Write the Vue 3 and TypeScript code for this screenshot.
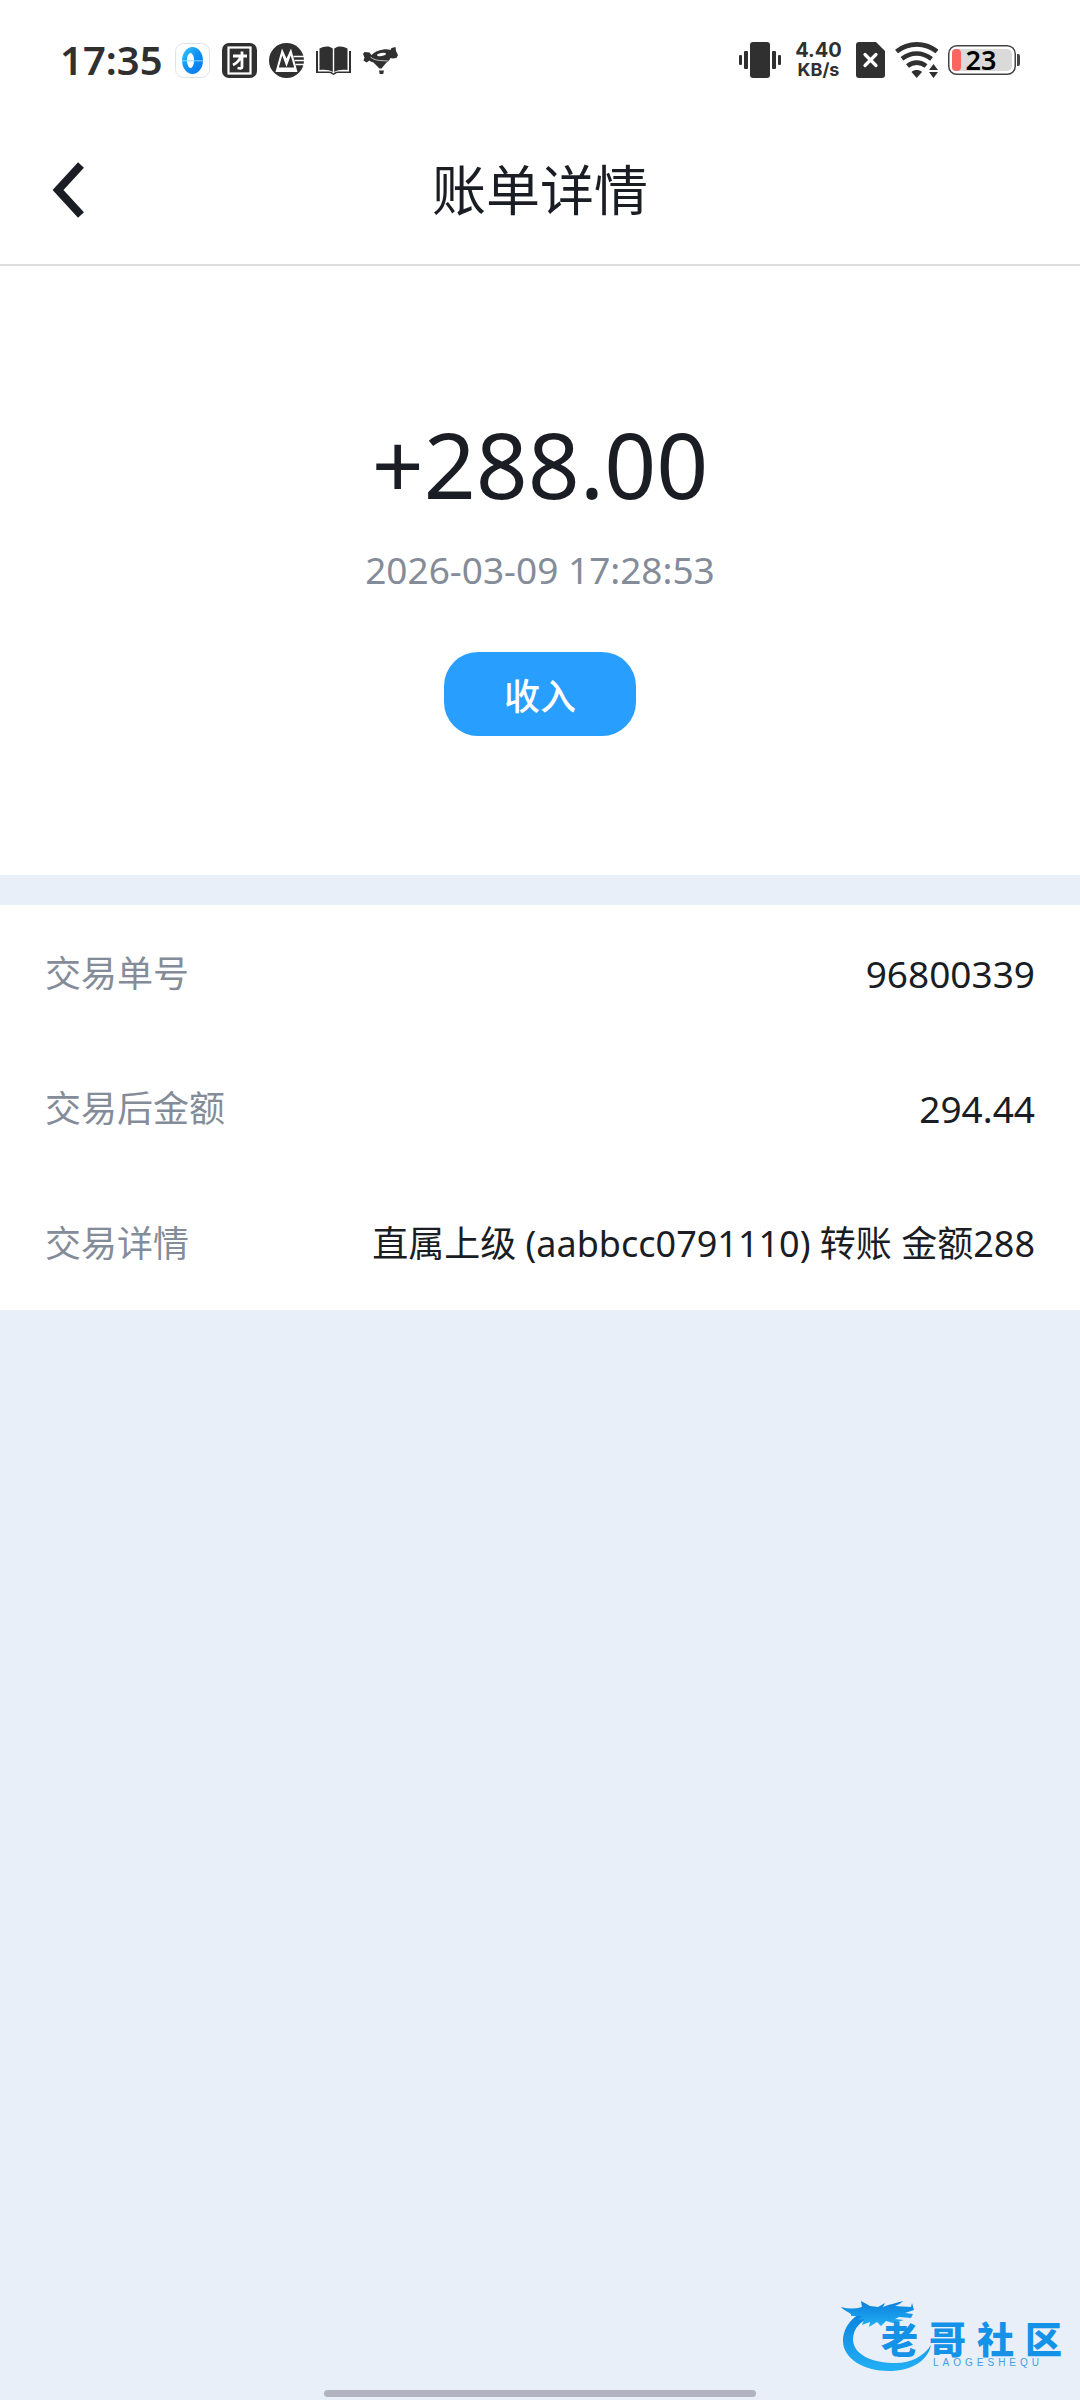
<script setup lang="ts">
interface DetailRow {
  label: string
  value: string
  numeric: boolean
}

const rows: DetailRow[] = [
  { label: '交易单号', value: '96800339', numeric: true },
  { label: '交易后金额', value: '294.44', numeric: true },
  { label: '交易详情', value: '直属上级 (aabbcc0791110) 转账 金额288', numeric: false },
]
const brand: string[] = ['老', '哥', '社', '区']
</script>

<template>
  <div class="page">
    <header class="top">
      <div class="status">
        <div class="status-side">
          <time class="clock">17:35</time>
          <svg class="app-icon" viewBox="0 0 35 35" aria-hidden="true">
            <defs>
              <linearGradient id="ring" x1="0" y1="0" x2="1" y2="1">
                <stop offset="0" stop-color="#3ccbf5" />
                <stop offset="0.5" stop-color="#0f8ff5" />
                <stop offset="1" stop-color="#0a78f0" />
              </linearGradient>
            </defs>
            <rect x="0.5" y="0.5" width="34" height="34" rx="8" fill="#fff" stroke="#dfe3e8" />
            <ellipse cx="17.5" cy="17.5" rx="10.5" ry="13.5" fill="url(#ring)" />
            <ellipse cx="15.5" cy="17.5" rx="3.6" ry="7.5" fill="#fff" />
            <path d="M7 17.8h21" stroke="#8fd6ff" stroke-width="1" />
          </svg>
          <svg class="app-icon" viewBox="0 0 35 35" aria-hidden="true">
            <rect width="35" height="35" rx="7" fill="#303030" />
            <rect x="6.5" y="4.5" width="22" height="26" fill="none" stroke="#fff" stroke-width="2.2" />
            <path d="M11 13h14M20 8.5v15.500c0 1.600-1.600 1.600-4.500 1M19 13.500c-1.600 4-4 6.500-8 8.500" fill="none" stroke="#fff" stroke-width="2.800" />
          </svg>
          <svg class="app-icon" viewBox="0 0 35 35" aria-hidden="true">
            <circle cx="17.500" cy="17.500" r="17.500" fill="#303030" />
            <path d="M6.500 29 13 5.500l4.500 10L22 5.500 28.500 29z" fill="#fff" />
            <path d="M9.800 24.500l3.500-12 4.200 11.500 4.200-11.500 3.500 12z" fill="#303030" />
            <path d="M24.500 13.500H35M25.500 17.500H35M26.500 21.500H35" stroke="#fff" stroke-width="1.600" />
          </svg>
          <svg class="app-icon" viewBox="0 0 35 35" aria-hidden="true">
            <path d="M0 8h2v20.500h11c2 0 3.500.8 4.500 2 1-1.200 2.500-2 4.500-2h11V8h2v22H21l-3.500 2-3.500-2H0z" fill="#303030" />
            <path d="M3.500 5.500C8 3 13 2.500 16.800 5.500v23.500C13.500 26.500 8 26.300 3.500 27zM31.500 5.500C27 3 22 2.500 18.200 5.500v23.500C21.500 26.500 27 26.300 31.500 27z" fill="#303030" />
          </svg>
          <svg class="app-icon" viewBox="0 0 35 35" aria-hidden="true">
            <path d="M0 11 1.500 9l5 .5 2 2.500c3-3 7-5 12-5.500 3-.5 5 0 7 .5l1-2 4-1 .5 4 2 4-1.500 3-4 .5-2-.5c-1 2-2 3.500-4 4.500l-5 6h-2l-6-6c-2-.5-3-1-4-2l-3 2-3-2 1-3z" fill="#303030" />
            <path d="M7.500 14c2 2 5 3 9 3.500l9 .5" fill="none" stroke="#fff" stroke-width="0.700" />
            <ellipse cx="18.500" cy="11.500" rx="4.500" ry="1.500" transform="rotate(-10 18.500 11.500)" fill="#fff" />
            <path d="M16 27.500h5l-.8 3.500h-3.500z" fill="#303030" />
          </svg>
        </div>
        <div class="status-side right">
          <svg class="vibrate" viewBox="0 0 42 36" aria-hidden="true">
            <g fill="#303030">
              <rect x="11" width="20" height="36" rx="3" />
              <rect x="5" y="9" width="4" height="18" rx="1" />
              <rect x="33" y="9" width="4" height="18" rx="1" />
              <rect y="13" width="3" height="10" rx="1" />
              <rect x="39" y="13" width="3" height="10" rx="1" />
            </g>
          </svg>
          <div class="speed"><span>4.40</span><span class="unit">KB/s</span></div>
          <svg class="sim" viewBox="0 0 29 36" aria-hidden="true">
            <path d="M3 0h17l9 9v24a3 3 0 0 1-3 3H3a3 3 0 0 1-3-3V3a3 3 0 0 1 3-3z" fill="#303030" />
            <path d="M9 12.500l11 11M20 12.500l-11 11" stroke="#fff" stroke-width="3.200" stroke-linecap="round" />
          </svg>
          <svg class="wifi" viewBox="0 0 43 36" aria-hidden="true">
            <g fill="none" stroke="#303030" stroke-width="4.600">
              <path d="M1.500 9.500c12-9.500 28.500-9.500 40.500 0" />
              <path d="M7 16.800c9-7 20-7 29.500 0" />
              <path d="M12.500 24c5.500-4.500 13-4.500 18.500 0" />
            </g>
            <path d="M16.500 30c3-2.600 7.500-2.600 10.500 0L21.700 36z" fill="#303030" />
            <path d="M34 28 38.500 22l4.500 6zM34 30h9l-4.500 6z" fill="#303030" />
          </svg>
          <div class="battery">
            <svg class="battery-body" viewBox="0 0 72 30" aria-hidden="true">
              <rect x="0.750" y="0.750" width="66.500" height="28.500" rx="8" fill="#fff" stroke="#444" stroke-width="1.500" />
              <rect x="4" y="4" width="60" height="22" rx="5" fill="#dadada" />
              <rect x="4" y="4" width="9" height="22" rx="4" fill="#fb6560" />
              <path d="M69 9h1a2 2 0 0 1 2 2v8a2 2 0 0 1-2 2h-1z" fill="#444" />
            </svg>
            <span class="battery-level">23</span>
          </div>
        </div>
      </div>
      <nav class="nav">
        <button class="back" type="button" aria-label="返回">
          <svg viewBox="0 0 32 56" aria-hidden="true">
            <path d="M29 3 6 28 29 53" fill="none" stroke="#1a1d24" stroke-width="8" />
          </svg>
        </button>
        <h1>账单详情</h1>
      </nav>
    </header>

    <section class="summary">
      <p class="amount">+288.00</p>
      <time class="date">2026-03-09 17:28:53</time>
      <button class="kind" type="button">收入</button>
    </section>

    <dl class="details">
      <div v-for="row in rows" :key="row.label" class="row">
        <dt>{{ row.label }}</dt>
        <dd :class="{ numeric: row.numeric }">{{ row.value }}</dd>
      </div>
    </dl>

    <footer class="footer">
      <div class="brand">
        <svg class="dragon" viewBox="0 0 90 74" aria-hidden="true">
          <defs>
            <linearGradient id="dragon-fill" x1="0" y1="0" x2="0" y2="1">
              <stop offset="0" stop-color="#0a7fdc" />
              <stop offset="1" stop-color="#22b0f5" />
            </linearGradient>
          </defs>
          <g fill="url(#dragon-fill)">
            <path d="M32 11C14 14 2 28 2 43c0 17 20 30 46 30 22 0 39-10 42-26-7 11-20 18-35 18-24 0-42-8-43-23C12 30 20 21 38 16z" />
            <path d="M0 9c7 2 14 2 21 0l-1-6 9 5 8 1 7-4-2 4c7-3 14-4 20-6-2 2-5 4-8 5l16 1 1-4 2 7-9 3 8 1-2 4-12-1-4 2 9 1-11 3-7-2-5 5-4-4-8 5 1-5-8 3 2-6-6 1 4-4-11 0C12 15 4 14 0 9z" />
          </g>
        </svg>
        <div class="brand-text">
          <div class="brand-name"><span v-for="c in brand" :key="c">{{ c }}</span></div>
          <div class="brand-latin">LAOGESHEQU</div>
        </div>
      </div>
      <div class="home-bar"></div>
    </footer>
  </div>
</template>

<style>
body {
  background: #e8eff9;
}
</style>

<style scoped>
.page {
  display: flex;
  flex-direction: column;
  min-height: 100vh;
  background: #e8eff9;
  color: #1a1d24;
  font-family: "Noto Sans", "Noto Sans CJK SC", sans-serif;
}
.top {
  background: #fff;
  border-bottom: 2px solid #dcdcdc;
}
.status {
  display: flex;
  align-items: center;
  justify-content: space-between;
  height: 120px;
  padding: 0 60px;
  color: #303030;
}
.status-side {
  display: flex;
  align-items: center;
  gap: 12px;
}
.clock {
  font-size: 40px;
  font-weight: 600;
  line-height: 48px;
}
.app-icon {
  width: 35px;
  height: 35px;
}
.right {
  gap: 10px;
}
.vibrate {
  width: 42px;
  height: 36px;
}
.speed {
  display: flex;
  flex-direction: column;
  width: 55px;
  align-items: center;
  font-family: Inter, sans-serif;
  font-size: 20px;
  font-weight: 700;
  line-height: 20px;
}
.unit {
  font-size: 18px;
}
.sim {
  width: 29px;
  height: 36px;
}
.wifi {
  width: 43px;
  height: 36px;
}
.battery {
  position: relative;
  width: 72px;
  height: 30px;
}
.battery-body {
  display: block;
  width: 100%;
  height: 100%;
}
.battery-level {
  position: absolute;
  inset: 0 6px 0 0;
  color: #000;
  font-size: 27px;
  font-weight: 600;
  line-height: 30px;
  text-align: center;
}
.nav {
  display: grid;
  grid-template-columns: 1fr auto 1fr;
  align-items: center;
  height: 140px;
  padding: 0 52px 4px;
}
.back {
  justify-self: start;
  padding: 0;
  border: 0;
  background: none;
}
.back svg {
  display: block;
  width: 32px;
  height: 56px;
}
h1 {
  margin: 0;
  font-size: 54px;
  font-weight: 400;
  line-height: 72px;
}
.summary {
  display: flex;
  flex-direction: column;
  align-items: center;
  padding: 140px 45px 139px;
  background: #fff;
}
.amount {
  margin: 0;
  font-size: 91px;
  font-weight: 400;
  line-height: 116px;
}
.date {
  margin-top: 24px;
  color: #858c99;
  font-size: 37px;
  line-height: 48px;
}
.kind {
  width: 192px;
  height: 84px;
  margin-top: 58px;
  border: 0;
  border-radius: 34px;
  background: #289eff;
  color: #fff;
  font-family: inherit;
  font-size: 36px;
  font-weight: 500;
}
.details {
  margin: 30px 0 0;
  background: #fff;
}
.row {
  display: flex;
  align-items: center;
  justify-content: space-between;
  min-height: 133px;
  padding: 2px 45px 0;
  font-size: 36px;
  line-height: 48px;
}
dt {
  color: #858c99;
}
dd {
  margin: 0;
  text-align: right;
}
.numeric {
  font-size: 37px;
}
.footer {
  display: flex;
  flex-direction: column;
  margin-top: auto;
}
.brand {
  display: flex;
  align-items: flex-end;
  align-self: flex-end;
  margin: 0 18px 18px 0;
}
.dragon {
  width: 90px;
  height: 74px;
}
.brand-text {
  margin: 0 0 4px -50px;
}
.brand-name {
  display: flex;
  gap: 11px;
  color: #1492e8;
  font-family: "Noto Sans CJK SC", sans-serif;
  font-size: 37px;
  font-weight: 900;
  line-height: 40px;
}
.brand-latin {
  padding-left: 52px;
  color: #3f9fe6;
  font-family: "Liberation Sans", sans-serif;
  font-size: 10px;
  letter-spacing: 4px;
  line-height: 10px;
}
.home-bar {
  align-self: center;
  width: 40%;
  height: 7px;
  margin-bottom: 3px;
  border-radius: 4px;
  background: #b1b4c0;
}
</style>
